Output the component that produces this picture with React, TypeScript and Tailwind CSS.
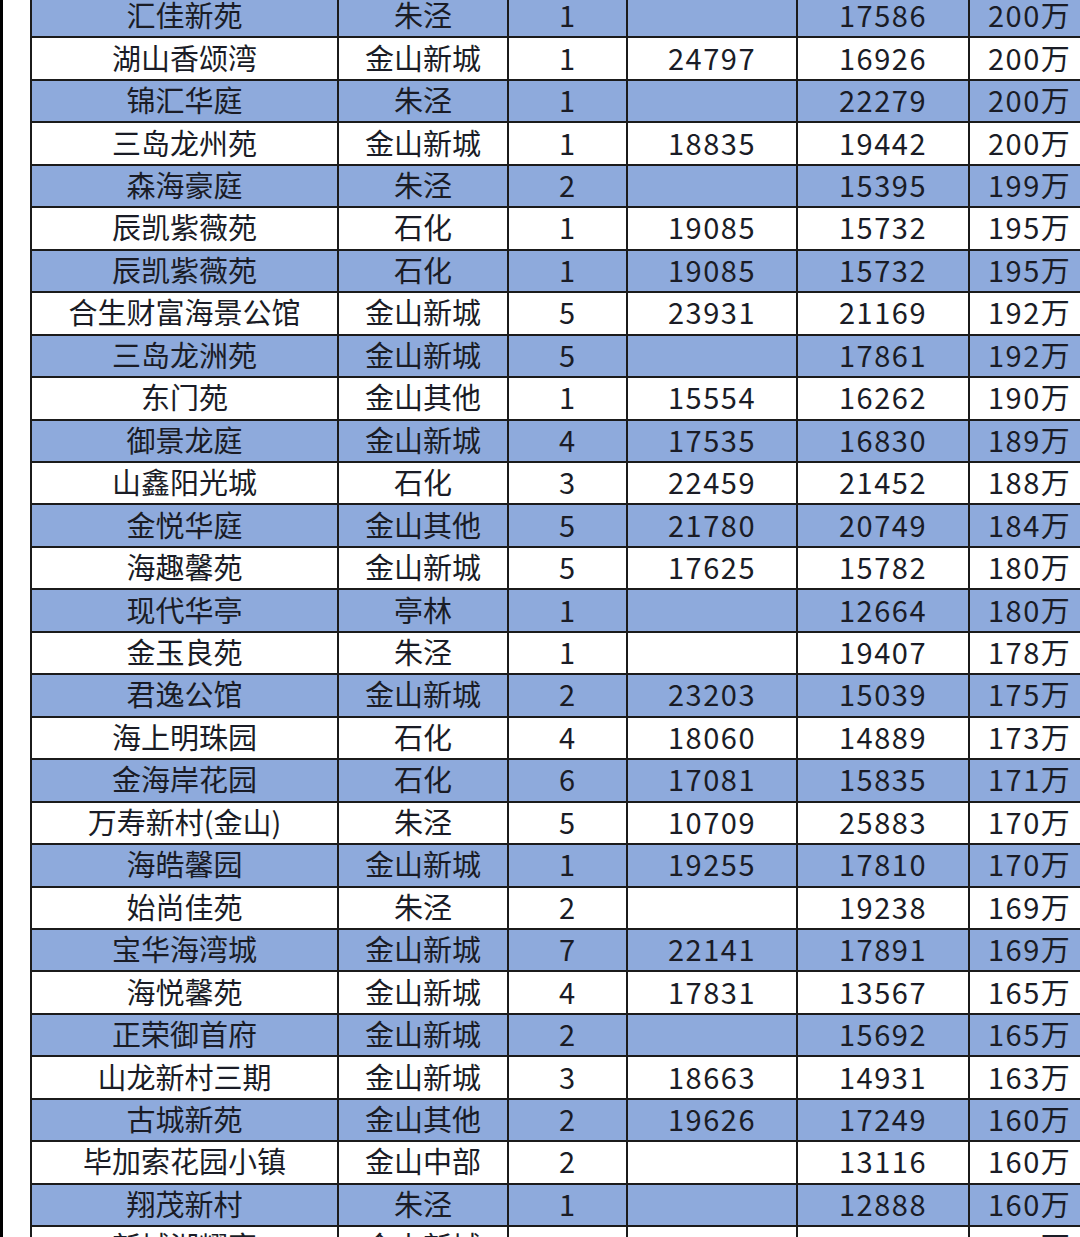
import React from "react";

type Row = [string, string, string, string, string, string];

const rows: Row[] = [
  ["汇佳新苑", "朱泾", "1", "", "17586", "200万"],
  ["湖山香颂湾", "金山新城", "1", "24797", "16926", "200万"],
  ["锦汇华庭", "朱泾", "1", "", "22279", "200万"],
  ["三岛龙州苑", "金山新城", "1", "18835", "19442", "200万"],
  ["森海豪庭", "朱泾", "2", "", "15395", "199万"],
  ["辰凯紫薇苑", "石化", "1", "19085", "15732", "195万"],
  ["辰凯紫薇苑", "石化", "1", "19085", "15732", "195万"],
  ["合生财富海景公馆", "金山新城", "5", "23931", "21169", "192万"],
  ["三岛龙洲苑", "金山新城", "5", "", "17861", "192万"],
  ["东门苑", "金山其他", "1", "15554", "16262", "190万"],
  ["御景龙庭", "金山新城", "4", "17535", "16830", "189万"],
  ["山鑫阳光城", "石化", "3", "22459", "21452", "188万"],
  ["金悦华庭", "金山其他", "5", "21780", "20749", "184万"],
  ["海趣馨苑", "金山新城", "5", "17625", "15782", "180万"],
  ["现代华亭", "亭林", "1", "", "12664", "180万"],
  ["金玉良苑", "朱泾", "1", "", "19407", "178万"],
  ["君逸公馆", "金山新城", "2", "23203", "15039", "175万"],
  ["海上明珠园", "石化", "4", "18060", "14889", "173万"],
  ["金海岸花园", "石化", "6", "17081", "15835", "171万"],
  ["万寿新村(金山)", "朱泾", "5", "10709", "25883", "170万"],
  ["海皓馨园", "金山新城", "1", "19255", "17810", "170万"],
  ["始尚佳苑", "朱泾", "2", "", "19238", "169万"],
  ["宝华海湾城", "金山新城", "7", "22141", "17891", "169万"],
  ["海悦馨苑", "金山新城", "4", "17831", "13567", "165万"],
  ["正荣御首府", "金山新城", "2", "", "15692", "165万"],
  ["山龙新村三期", "金山新城", "3", "18663", "14931", "163万"],
  ["古城新苑", "金山其他", "2", "19626", "17249", "160万"],
  ["毕加索花园小镇", "金山中部", "2", "", "13116", "160万"],
  ["翔茂新村", "朱泾", "1", "", "12888", "160万"],
  ["新城湖耀宸", "金山新城", "3", "20204", "18773", "156万"],
];

const cells = [
  "w-[309px] border-l-2 justify-center",
  "w-[170px] justify-center",
  "w-[119px] justify-center tracking-[1px]",
  "w-[170px] justify-center tracking-[1.5px]",
  "w-[172px] justify-center tracking-[1.5px]",
  "w-[130px] justify-start pl-[18px] tracking-[1.5px]",
];

export default function App() {
  return (
    <div
      className="flex h-[1237px] w-[1080px] overflow-hidden bg-white text-[29px] text-[#1a1c26]"
      style={{ fontFamily: '"Noto Sans CJK SC", "Noto Sans", sans-serif' }}
    >
      <div className="w-[3px] shrink-0 bg-black" />
      <div className="ml-[27px] mt-[-4px] flex flex-col">
        {rows.map((r, i) => (
          <div
            key={i}
            className={`flex h-[42.46px] shrink-0 border-b-2 border-[#1b1b1b] ${i % 2 === 0 ? "bg-[#8eaadc]" : "bg-white"}`}
          >
            {r.map((c, j) => (
              <div
                key={j}
                className={`${cells[j]} flex shrink-0 items-center whitespace-nowrap border-r-2 border-[#1b1b1b] pb-[3px] leading-none`}
              >
                {c}
              </div>
            ))}
          </div>
        ))}
      </div>
    </div>
  );
}
